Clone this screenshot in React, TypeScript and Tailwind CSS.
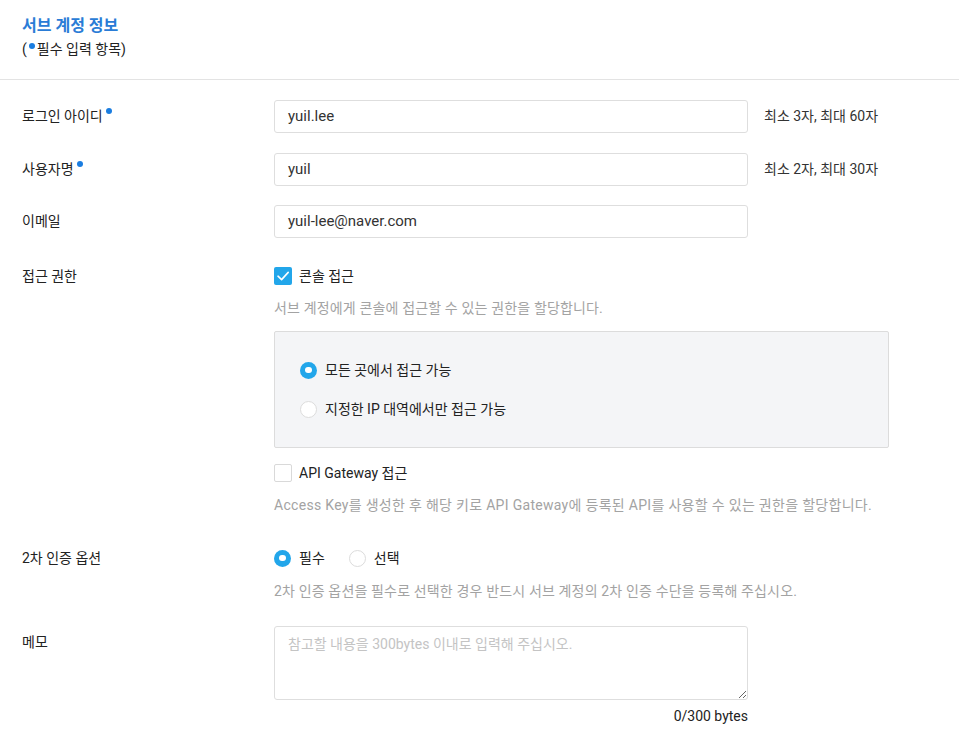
import React from "react";

const font = { fontFamily: 'Roboto, "Noto Sans CJK KR", sans-serif' };

function Dot() {
  return <span className="inline-block w-[6px] h-[6px] rounded-full bg-[#1a7de0] ml-[3px] relative top-[-6px]" />;
}

function Checkbox({ checked }: { checked?: boolean }) {
  return checked ? (
    <span className="w-[18px] h-[18px] rounded-[2px] bg-[#22a6ea] flex items-center justify-center shrink-0">
      <svg width="14" height="14" viewBox="0 0 14 14" fill="none">
        <path d="M2 7.2 L5.6 10.6 L12.2 3.4" stroke="white" strokeWidth="1.6" strokeLinecap="round" strokeLinejoin="round" />
      </svg>
    </span>
  ) : (
    <span className="w-[18px] h-[18px] rounded-[2px] bg-white border border-[#d9d9d9] shrink-0" />
  );
}

function Radio({ checked }: { checked?: boolean }) {
  return checked ? (
    <span className="w-[17px] h-[17px] rounded-full bg-[#22a6ea] flex items-center justify-center shrink-0">
      <span className="w-[7px] h-[6px] rounded-full bg-white" />
    </span>
  ) : (
    <span className="w-[17px] h-[17px] rounded-full bg-white border border-[#dcdcdc] shrink-0" />
  );
}

function Input({ value }: { value: string }) {
  return (
    <div className="w-[474px] h-[33px] border border-[#dedede] rounded-[3px] bg-white flex items-center pl-[13px] text-[15px] text-[#333]">
      {value}
    </div>
  );
}

export default function App() {
  return (
    <div className="w-[959px] h-[743px] bg-white text-[#222] overflow-hidden" style={font}>
      <div className="px-[22px] pt-[16px] pb-[20px] border-b border-[#e3e3e3]">
        <div className="text-[16px] leading-[20px] font-bold text-[#2a7cd6]">서브 계정 정보</div>
        <div className="text-[14px] leading-[20px] mt-[3px] text-[#222]">
          (<span className="inline-block w-[6px] h-[6px] rounded-full bg-[#1a7de0] relative top-[-5px] ml-[2px] mr-[2px]" />필수 입력 항목)
        </div>
      </div>

      <div className="px-[22px] pt-[20px] text-[14px]">
        <div className="flex items-center h-[33px]">
          <div className="w-[252px] flex items-center">로그인 아이디<Dot /></div>
          <Input value="yuil.lee" />
          <div className="ml-[16px] text-[#333]">최소 3자, 최대 60자</div>
        </div>
        <div className="flex items-center h-[33px] mt-[20px]">
          <div className="w-[252px] flex items-center">사용자명<Dot /></div>
          <Input value="yuil" />
          <div className="ml-[16px] text-[#333]">최소 2자, 최대 30자</div>
        </div>
        <div className="flex items-center h-[33px] mt-[19px]">
          <div className="w-[252px]">이메일</div>
          <Input value="yuil-lee@naver.com" />
        </div>

        <div className="flex mt-[28px]">
          <div className="w-[252px] leading-[20px]">접근 권한</div>
          <div className="flex flex-col">
            <div className="flex items-center h-[20px] gap-[7px]">
              <Checkbox checked />
              <span>콘솔 접근</span>
            </div>
            <div className="mt-[12px] leading-[20px] text-[#a3a3a3] tracking-[0.15px]">서브 계정에게 콘솔에 접근할 수 있는 권한을 할당합니다.</div>
            <div className="mt-[13px] w-[615px] h-[117px] bg-[#f4f5f7] border border-[#dcdcdc] rounded-[2px] pl-[25px] pt-[28px]">
              <div className="flex items-center h-[20px] gap-[8px]">
                <Radio checked />
                <span>모든 곳에서 접근 가능</span>
              </div>
              <div className="flex items-center h-[20px] gap-[8px] mt-[19px]">
                <Radio />
                <span>지정한 IP 대역에서만 접근 가능</span>
              </div>
            </div>
            <div className="flex items-center h-[20px] gap-[7px] mt-[15px]">
              <Checkbox />
              <span>API Gateway 접근</span>
            </div>
            <div className="mt-[12px] leading-[20px] text-[#a3a3a3] tracking-[0.3px]">
              Access Key를 생성한 후 해당 키로 API Gateway에 등록된 API를 사용할 수 있는 권한을 할당합니다.
            </div>
          </div>
        </div>

        <div className="flex mt-[33px]">
          <div className="w-[252px] leading-[20px]">2차 인증 옵션</div>
          <div className="flex flex-col">
            <div className="flex items-center h-[20px]">
              <Radio checked />
              <span className="ml-[8px]">필수</span>
              <span className="ml-[24px] flex"><Radio /></span>
              <span className="ml-[8px]">선택</span>
            </div>
            <div className="mt-[13px] leading-[20px] text-[#a3a3a3] tracking-[0.15px]">
              2차 인증 옵션을 필수로 선택한 경우 반드시 서브 계정의 2차 인증 수단을 등록해 주십시오.
            </div>
          </div>
        </div>

        <div className="flex mt-[25px]">
          <div className="w-[252px] leading-[20px] pt-[6px]">메모</div>
          <div className="flex flex-col items-end w-[474px]">
            <textarea
              className="w-[474px] h-[74px] border border-[#dedede] rounded-[3px] px-[13px] pt-[7px] text-[14px] leading-[20px] placeholder:text-[#c4c4c4] outline-none"
              placeholder="참고할 내용을 300bytes 이내로 입력해 주십시오."
              style={font}
            />
            <div className="mt-[6px] leading-[20px] text-[#222]">0/300 bytes</div>
          </div>
        </div>
      </div>
    </div>
  );
}
